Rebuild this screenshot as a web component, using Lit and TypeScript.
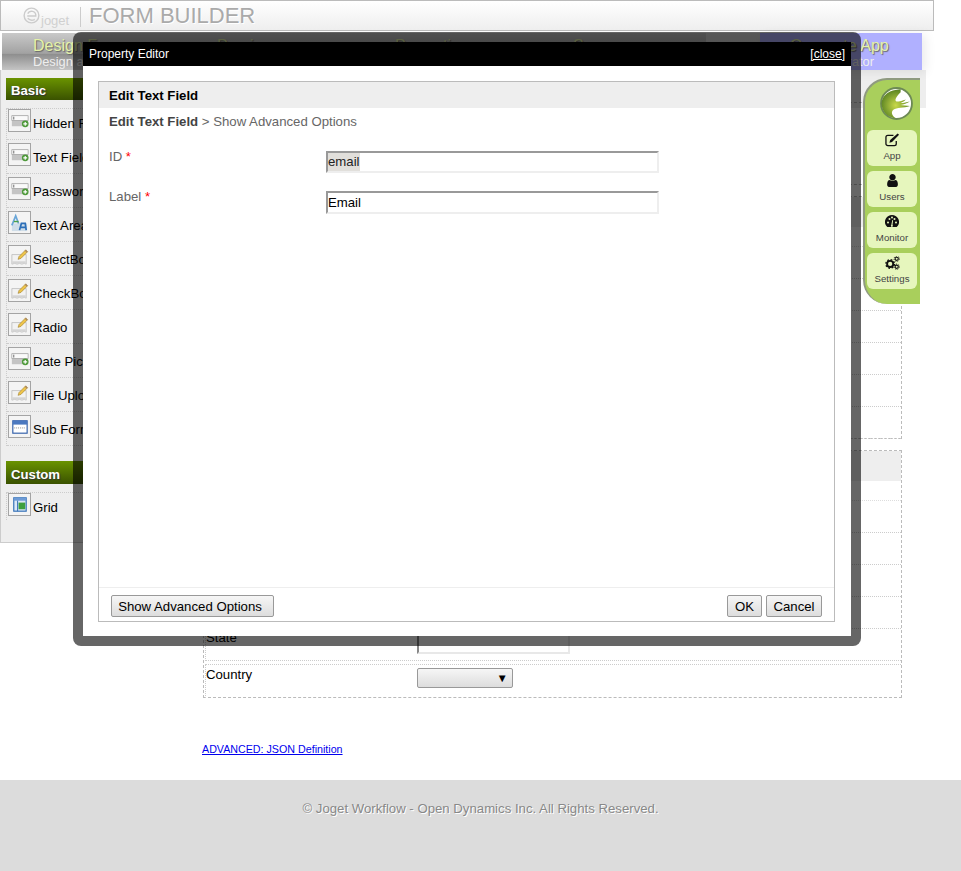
import { LitElement, html, css, svg } from "lit";
import { customElement } from "lit/decorators.js";

const FIELD_ICON = svg`<rect x="3" y="6" width="17" height="11" fill="#c4c4c4"/><rect x="3" y="6" width="17" height="5" fill="#fafafa" stroke="#999" stroke-width=".7"/><path d="M5 7v3" stroke="#666" stroke-width="1"/><circle cx="17" cy="14.500" r="3.500" fill="#4e9a3a"/><path d="M15 14.500h4M17 12.500v4" stroke="#fff" stroke-width="1.200"/>`;
const EDIT_ICON = svg`<path d="M3 9h15v10l-2-.8-2.500.8-2.500-.8-2.500.8-2.500-.8-3 .8z" fill="#f2f2f2" stroke="#c4c4c4"/><path d="M3.500 16h14v2.500h-14z" fill="#d4d4d4"/><path d="M17.500 4l2 2-7 7-3 1 1-3z" fill="#eec44a" stroke="#9a7b2a" stroke-width=".6"/><path d="M17.500 4l2 2-1 1-2-2z" fill="#a86"/>`;
const TEXTAREA_ICON = svg`<rect x="3" y="12" width="16" height="8" fill="#cfdde8"/><path d="M3 14l4-10 3 8" fill="none" stroke="#6aa6d8" stroke-width="1.800"/><path d="M5 10h5" stroke="#4aa04a" stroke-width="1.500"/><path d="M11 19l2-7h4l1 7M12.500 16h5" fill="none" stroke="#2d6fb8" stroke-width="1.800"/>`;
const FORM_ICON = svg`<rect x="4" y="5" width="15" height="13" fill="#fff" stroke="#2f5da8" stroke-width="1.200"/><rect x="4" y="5" width="15" height="4" fill="#4a78c0"/><path d="M5.500 12.500h12" stroke="#888" stroke-dasharray="1 1"/>`;
const GRID_ICON = svg`<rect x="5" y="4" width="13" height="14" fill="#dbe8f7" stroke="#2f6db5" stroke-width="1.200"/><rect x="5" y="4" width="13" height="3" fill="#6d9bd6"/><rect x="10" y="9" width="7" height="7" fill="#3fa03f"/><path d="M9 7v11" stroke="#2f6db5"/>`;

const BASIC: [string, unknown][] = [
  ["Hidden Field", FIELD_ICON],
  ["Text Field", FIELD_ICON],
  ["Password", FIELD_ICON],
  ["Text Area", TEXTAREA_ICON],
  ["SelectBox", EDIT_ICON],
  ["CheckBox", EDIT_ICON],
  ["Radio", EDIT_ICON],
  ["Date Picker", FIELD_ICON],
  ["File Upload", EDIT_ICON],
  ["Sub Form", FORM_ICON],
];

const NAV: [string, unknown][] = [
  ["App", svg`<svg viewBox="0 0 16 14" width="15" height="14"><path d="M12 8v3a2 2 0 0 1-2 2H3a2 2 0 0 1-2-2V4a2 2 0 0 1 2-2h6" fill="none" stroke="#111" stroke-width="1.400"/><path d="M5.500 7l-.8 2.800 2.800-.8L15 1.500 13.500 0z" fill="#111"/></svg>`],
  ["Users", svg`<svg viewBox="0 0 1792 1792" width="15" height="15"><path fill="#111" d="M1536 1399q0 109-62.500 187t-150.500 78h-854q-88 0-150.500-78t-62.500-187q0-85 8.500-160.500t31.500-152 58.500-131 94-89 134.500-34.500q131 128 313 128t313-128q76 0 134.500 34.500t94 89 58.500 131 31.500 152 8.500 160.500zm-256-887q0 159-112.500 271.500t-271.500 112.500-271.500-112.500-112.500-271.500 112.500-271.500 271.500-112.500 271.500 112.500 112.500 271.500z"/></svg>`],
  ["Monitor", svg`<svg viewBox="0 0 14 13" width="14" height="13"><path fill="#111" d="M7 0a7 7 0 0 1 6 10.600l-1.300 1.400H2.300L1 10.600A7 7 0 0 1 7 0z"/><g fill="#e6f6bd"><circle cx="3" cy="7.500" r="1"/><circle cx="4.500" cy="4" r="1"/><circle cx="7" cy="2.600" r="1"/><circle cx="9.500" cy="4" r="1"/><circle cx="11" cy="7.500" r="1"/><path d="M6.300 10l1-5 .8.200-.6 4.800a1 1 0 1 1-1.200 0z"/></g></svg>`],
  ["Settings", svg`<svg viewBox="0 0 16 15" width="15" height="14"><circle cx="5.500" cy="8.500" r="3.300" fill="none" stroke="#111" stroke-width="2"/><circle cx="5.500" cy="8.500" r="4.600" fill="none" stroke="#111" stroke-width="1.500" stroke-dasharray="1.800 1.800"/><circle cx="12.500" cy="3" r="1.700" fill="none" stroke="#111" stroke-width="1.200"/><circle cx="12.500" cy="3" r="2.800" fill="none" stroke="#111" stroke-width="1" stroke-dasharray="1.200 1.200"/><circle cx="12.500" cy="11.500" r="1.700" fill="none" stroke="#111" stroke-width="1.200"/><circle cx="12.500" cy="11.500" r="2.800" fill="none" stroke="#111" stroke-width="1" stroke-dasharray="1.200 1.200"/></svg>`],
];

@customElement("app-root")
export class AppRoot extends LitElement {
  static styles = css`
    :host {
      display: block;
      position: relative;
      width: 961px;
      height: 871px;
      overflow: hidden;
      background: #fff;
      font-family: "Liberation Sans", Arial, sans-serif;
      font-size: 13.200px;
      color: #000;
    }
    .top {
      box-sizing: border-box;
      width: 934px;
      height: 31px;
      border: 1px solid #bbb;
      background: linear-gradient(#fff, #eee);
      display: flex;
      align-items: center;
      padding-left: 22px;
    }
    .brand { display: flex; align-items: flex-end; width: 57px; height: 22px; }
    .brand svg { align-self: flex-start; margin-top: 2px; flex: none; }
    .brand span { font-size: 13px; color: #d0d0d0; margin-left: 1px; line-height: 13px; }
    .sep { width: 1px; height: 20px; background: #ccc; margin-top: 2px; }
    .title { font-size: 22px; color: #aaa; margin-left: 8px; text-shadow: 1px 1px 0 #fff; }

    .tabs { display: flex; margin: 2px 0 0 2px; width: 920px; height: 37px; }
    .tab {
      box-sizing: border-box;
      width: 178px;
      padding-left: 45px;
      background: linear-gradient(#c9c9c9, #a2a2a2 55%, #8f8f8f 58%, #c4c4c4);
      position: relative;
    }
    .tab.first { width: 170px; padding-left: 31px; }
    .tab.filler { width: 54px; padding: 0; background: linear-gradient(#dadada, #c4c4c4); }
    .tab.last {
      width: 162px;
      padding-left: 30px;
      background: #b0b0ff;
      box-shadow: 4px 2px 10px rgba(0, 0, 0, 0.08);
    }
    .tab b { display: block; font-weight: normal; font-size: 16px; line-height: 19px; margin-top: 3px; color: #e4f2a8; text-shadow: 1px 1px 1px #666; white-space: nowrap; }
    .tab i { display: block; font-style: normal; font-size: 12.800px; line-height: 14px; color: #eee; white-space: nowrap; }

    .main { display: flex; height: 710px; align-items: flex-start; }
    .palette {
      box-sizing: border-box;
      width: 203px;
      height: 473px;
      background: #eee;
      border-left: 1px solid #ccc;
      border-bottom: 1px solid #ccc;
      padding: 8px 0 0 5px;
    }
    .heading {
      height: 22px;
      line-height: 25px;
      padding-left: 5px;
      background: linear-gradient(#6a9300, #3a5200);
      color: #fff;
      font-weight: bold;
      text-shadow: 1px 1px 1px #333;
    }
    .heading.custom { margin-top: 15px; height: 23px; line-height: 27px; }
    .items { margin-top: 8px; border-left: 1px dotted #ccc; }
    .item {
      box-sizing: border-box;
      height: 34px;
      padding: 3px 0 0 1px;
      display: flex;
      gap: 2px;
      border-bottom: 1px dotted #ccc;
    }
    .item:first-child { height: 32px; padding-top: 0; border-top: 1px dotted #ccc; }
    .items.grid .item { border-bottom: 0; height: 28px; }
    .ico { box-sizing: border-box; width: 23px; height: 23px; border: 1px solid #a4a4a4; background: #f4f4f4; flex: none; display: block; }
    .item span { margin-top: 7px; white-space: nowrap; }

    .col {
      box-sizing: border-box;
      width: 723px;
      padding-top: 32px;
      background: linear-gradient(#eee, #eee) 0 0 / 100% 38px no-repeat;
    }
    .section { box-sizing: border-box; width: 699px; border: 1px dashed #bbb; }
    .section.a { height: 83px; }
    .section.b { height: 243px; margin-top: 11px; }
    .section.c { height: 248px; margin-top: 11px; }
    .sec-head { height: 30px; background: #eee; }
    .sub { height: 20px; box-sizing: border-box; border-bottom: 1px dotted #ddd; }
    .row { box-sizing: border-box; height: 32px; border-bottom: 1px dotted #ccc; border-left: 1px dotted #ccc; margin-left: 1px; display: flex; }
    .row.country { margin-top: 3px; border-top: 1px dotted #ccc; border-bottom: 0; height: 34px; }
    .lab { width: 211px; flex: none; padding-top: 1px; }
    .row.country .lab { padding-top: 2px; }
    .plain {
      box-sizing: border-box;
      margin-top: 2px;
      width: 153px;
      height: 23px;
      border: 2px solid;
      border-color: #888 #e8e8e8 #e8e8e8 #888;
      background: #fff;
    }
    .sel {
      box-sizing: border-box;
      margin-top: 3px;
      width: 96px;
      height: 20px;
      border: 1px solid #999;
      border-radius: 2px;
      background: linear-gradient(#f6f6f6, #ddd);
      display: flex;
      align-items: center;
      justify-content: flex-end;
      padding-right: 4px;
      font-size: 11.500px;
    }
    .link { display: block; margin: 45px 0 0 -1px; font-size: 10.700px; color: #00e; text-decoration: underline; line-height: 12px; }

    .foot {
      height: 91px;
      background: #dcdcdc;
      text-align: center;
      color: #888;
      padding-top: 21px;
      box-sizing: border-box;
      text-shadow: 1px 1px 0 #fff;
      line-height: 15px;
    }

    .nav {
      position: absolute;
      left: 863px;
      top: 78px;
      box-sizing: border-box;
      width: 57px;
      height: 226px;
      background: #a9cf5c;
      border-left: 2px solid #8f9a80;
      border-top: 2px solid #8f9a80;
      border-radius: 24px 0 0 24px;
      display: flex;
      flex-direction: column;
      align-items: flex-start;
      padding: 7px 0 0 2px;
      gap: 5px;
    }
    .nav .logo { display: block; margin: 0 0 5px 13px; }
    .card {
      box-sizing: border-box;
      width: 50px;
      height: 36px;
      border-radius: 6px;
      background: #e6f6bd;
      display: flex;
      flex-direction: column;
      align-items: center;
      padding-top: 2px;
      font-size: 9.700px;
      color: #444;
    }
    .card .g { height: 15px; display: flex; align-items: center; }
    .card .t { margin-top: 3px; line-height: 12px; }

    .dialog {
      position: absolute;
      left: 73px;
      top: 32px;
      box-sizing: border-box;
      width: 788px;
      height: 614px;
      border: 10px solid rgba(0, 0, 0, 0.6);
      border-radius: 8px;
      background: #fff;
      background-clip: padding-box;
      display: flex;
      flex-direction: column;
    }
    .bar {
      height: 24px;
      background: #000;
      color: #fff;
      font-size: 12px;
      display: flex;
      justify-content: space-between;
      align-items: center;
      padding: 0 6px;
      flex: none;
    }
    .bar a { color: #fff; text-decoration: underline; }
    .panel {
      box-sizing: border-box;
      flex: 1;
      margin: 15px 16px 14px 15px;
      border: 1px solid #bbb;
      display: flex;
      flex-direction: column;
    }
    .p-head { height: 26px; line-height: 27px; background: #eee; padding-left: 10px; font-weight: bold; flex: none; }
    .body { flex: 1; padding: 6px 0 0 10px; color: #666; }
    .crumb { line-height: 15px; }
    .crumb b { color: #444; }
    .fields { margin-top: 22px; display: grid; grid-template-columns: 217px 333px; row-gap: 18px; }
    .fields label { line-height: 15px; margin-top: -2px; }
    .fields em { font-style: normal; color: #f00; }
    .inp {
      box-sizing: border-box;
      height: 22px;
      border: 2px solid;
      border-color: #999 #eee #eee #999;
      color: #000;
      line-height: 18px;
      background: #fff;
    }
    .inp.tall { height: 23px; line-height: 20px; }
    .inp .chosen { background: #e1dfdb; color: #222; display: inline-block; line-height: 18px; }
    .actions {
      box-sizing: border-box;
      height: 34px;
      flex: none;
      border-top: 1px solid #eee;
      display: flex;
      align-items: flex-start;
      gap: 4px;
      padding: 7px 12px 0 12px;
    }
    button {
      height: 22px;
      box-sizing: border-box;
      padding: 0;
      font: 13.200px "Liberation Sans", Arial, sans-serif;
      color: #000;
      border: 1px solid #999;
      border-radius: 2px;
      background: linear-gradient(#f6f6f6, #ddd);
    }
    button.adv { width: 163px; margin-right: auto; padding-right: 5px; }
    button.ok { width: 35px; }
    button.cancel { width: 56px; }
  `;

  private rows(n: number) {
    return Array.from({ length: n }, () => html`<div class="row"></div>`);
  }

  render() {
    return html`
      <div class="top">
        <div class="brand">
          <svg width="17" height="17" viewBox="0 0 18 18"><circle cx="9" cy="9" r="7.800" fill="none" stroke="#ccc" stroke-width="1.500"/><path d="M4.500 9.500h9a4.500 4.500 0 0 0-8.500-2.500M5 12c2 2 5 2.500 7.500 1" fill="none" stroke="#ccc" stroke-width="1.500"/></svg>
          <span>joget</span>
        </div>
        <div class="sep"></div>
        <div class="title">FORM BUILDER</div>
      </div>
      <div class="tabs">
        <div class="tab first"><b>Design Form</b><i>Design a Form</i></div>
        <div class="tab"><b>Preview</b><i>Preview the Form</i></div>
        <div class="tab"><b>Properties</b><i>Form Properties</i></div>
        <div class="tab"><b>Save</b><i>Save the Form</i></div>
        <div class="tab filler"></div>
        <div class="tab last"><b>Generate App</b><i>App Generator</i></div>
      </div>
      <div class="main">
        <div class="palette">
          <div class="heading">Basic</div>
          <div class="items">
            ${BASIC.map(([n, i]) => html`<div class="item"><svg class="ico" viewBox="0 0 22 22">${i}</svg><span>${n}</span></div>`)}
          </div>
          <div class="heading custom">Custom</div>
          <div class="items grid">
            <div class="item"><svg class="ico" viewBox="0 0 22 22">${GRID_ICON}</svg><span>Grid</span></div>
          </div>
        </div>
        <div class="col">
          <div class="section a"></div>
          <div class="section b">
            <div class="sec-head"></div>
            <div class="sub"></div>
            ${this.rows(6)}
          </div>
          <div class="section c">
            <div class="sec-head"></div>
            <div class="sub"></div>
            ${this.rows(4)}
            <div class="row"><div class="lab">State</div><div class="plain"></div></div>
            <div class="row country"><div class="lab">Country</div><div class="sel">▼</div></div>
          </div>
          <a class="link" href="#">ADVANCED: JSON Definition</a>
        </div>
      </div>
      <div class="foot">© Joget Workflow - Open Dynamics Inc. All Rights Reserved.</div>

      <div class="nav">
        <svg class="logo" width="33" height="33" viewBox="0 0 32 32">
          <defs><radialGradient id="lg" cx=".5" cy=".55" r=".6"><stop offset="0" stop-color="#c9d94a"/><stop offset="1" stop-color="#4e7a1e"/></radialGradient></defs>
          <circle cx="16" cy="16" r="15" fill="#fff" stroke="#6d8a55" stroke-width="1.800"/>
          <path d="M20 2.200C9 2.500 1.500 8.500 1.500 16c0 8 6.500 14 14.500 14.500-4-2-6-6-3-8.500 3-2 10-1.500 16-3.500-3-.5-7-.5-9-1 3-.8 6-1.500 9-3.500-3 .7-6 1.500-9 1.500 2-1 4-2 5-3.500-3 1-6 2-9 2-2-1-1-4 4-9z" fill="url(#lg)"/>
        </svg>
        ${NAV.map(([n, i]) => html`<div class="card"><div class="g">${i}</div><div class="t">${n}</div></div>`)}
      </div>

      <div class="dialog">
        <div class="bar"><span>Property Editor</span><a href="#">[close]</a></div>
        <div class="panel">
          <div class="p-head">Edit Text Field</div>
          <div class="body">
            <div class="crumb"><b>Edit Text Field</b> &gt; Show Advanced Options</div>
            <div class="fields">
              <label>ID <em>*</em></label>
              <div class="inp"><span class="chosen">email</span></div>
              <label>Label <em>*</em></label>
              <div class="inp tall">Email</div>
            </div>
          </div>
          <div class="actions">
            <button class="adv">Show Advanced Options</button>
            <button class="ok">OK</button>
            <button class="cancel">Cancel</button>
          </div>
        </div>
      </div>
    `;
  }
}
